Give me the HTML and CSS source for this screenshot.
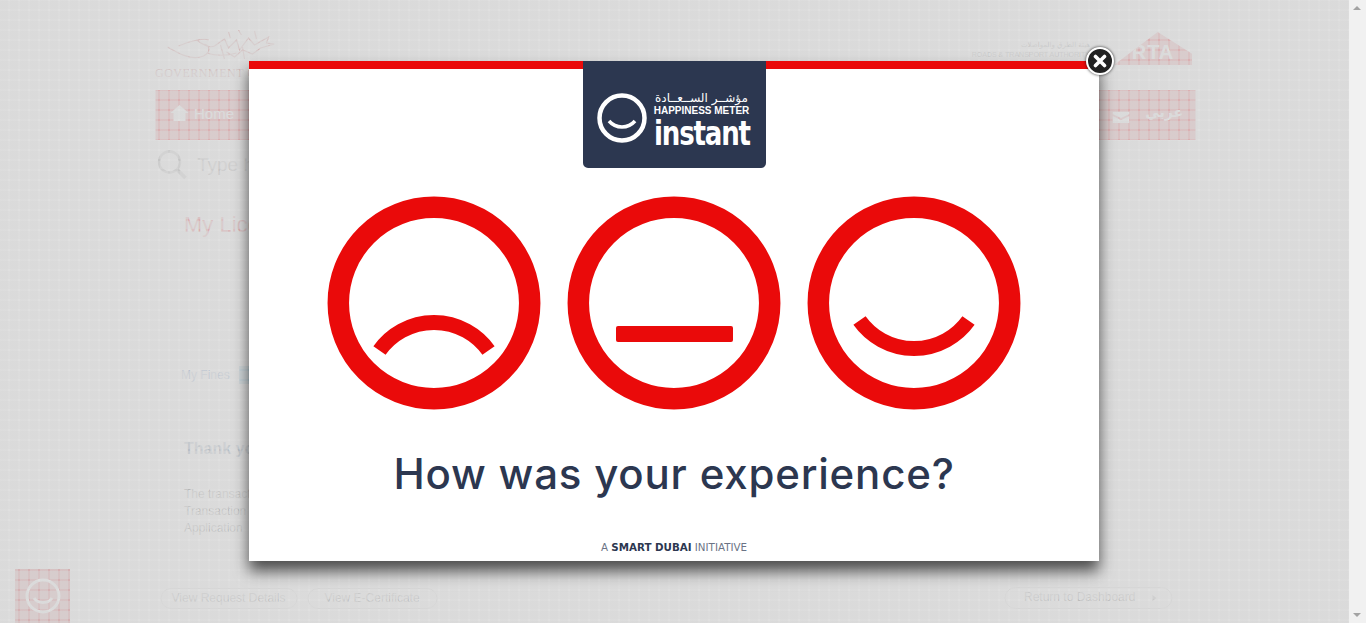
FILE: index.html
```html
<!DOCTYPE html>
<html lang="en">
<head>
    <meta charset="UTF-8">
    <meta name="viewport" content="width=device-width, initial-scale=1.0">
    <title>Happiness Meter</title>
    <link rel="stylesheet" href="styles.css">
</head>
<body>
<div class="viewport">
    <div class="main">
        <div class="page">
            <header class="top">
                <div class="gov">
                    <svg class="gov-mark" width="108" height="34" viewBox="0 0 108 34" fill="none" stroke="#c23a3a" stroke-width="1.200">
                        <path d="M12 17c14-6 26-8 30-6M1 18c10 6 24 14 36 9 8-4 6-10 1-12M30 11c8 6 14 8 18 6l10-7 4 9 8-8 3 10 9-12 6 7 14-8-2 6 8 1-14 4-8 6-10-4-8 7-8-5"/>
                        <path d="M40 24c10 3 20 3 30 0M62 3l2 6M72 1l3 5M88 2l2 8M54 16l4 14M76 18l2 12"/>
                    </svg>
                    <div class="gov-name">GOVERNMENT OF DUBAI</div>
                </div>
                <div class="rta">
                    <div class="rta-name">
                        <div class="rta-ar">هيئة الطرق والمواصلات</div>
                        <div class="rta-en">ROADS &amp; TRANSPORT AUTHORITY</div>
                    </div>
                    <div class="rta-logo">RTA</div>
                </div>
            </header>

            <nav class="menu">
                <a class="menu-item" href="#">
                    <svg width="18" height="16" viewBox="0 0 18 16" fill="#fff"><path d="M9 0L0 8h3v8h12V8h3z"/></svg>
                    Home
                </a>
                <a class="menu-item" href="#">
                    <svg width="18" height="16" viewBox="0 0 18 16" fill="#fff"><path d="M9 0L0 8h3v8h12V8h3z"/></svg>
                </a>
                <div class="menu-right">
                    <svg width="17" height="11" viewBox="0 0 17 11" fill="#fff"><path d="M0 0h17v2L8.500 6 0 2zM0 4l8.500 4L17 4v7H0z"/></svg>
                    <a class="menu-lang" href="#">عربي</a>
                </div>
            </nav>

            <div class="search">
                <svg width="30" height="30" viewBox="0 0 30 30" fill="none" stroke="#777"><circle cx="12" cy="12" r="10.500" stroke-width="2.500"/><path d="M20 20l8 8" stroke-width="3.500"/></svg>
                <span class="search-text">Type here</span>
            </div>

            <div class="content">
                <h2 class="title">My Licences</h2>
                <div class="fines">
                    My Fines
                    <span class="fines-icon"></span>
                </div>
                <h3 class="thanks">Thank you</h3>
                <p class="note">The transaction<br>Transaction<br>Application</p>
            </div>

            <div class="actions">
                <a class="pill pill-details" href="#">View Request Details</a>
                <a class="pill pill-cert" href="#">View E-Certificate</a>
                <a class="pill pill-back" href="#">Return to Dashboard <span class="pill-arrow"></span></a>
            </div>
        </div>

        <div class="feedback">
            <svg width="36" height="36" viewBox="0 0 36 36" fill="none" stroke="#fff" stroke-width="3"><circle cx="18" cy="18" r="16"/><path d="M9 20c4 6 14 6 18 0"/></svg>
        </div>

        <div class="overlay"></div>

        <div class="modal">
            <div class="badge">
                <svg class="badge-face" width="52" height="52" viewBox="0 0 52 52" fill="none" stroke="#fff"><circle cx="26" cy="26" r="22.500" stroke-width="4.500"/><path d="M13 29c7 8 19 8 26 0" stroke-width="3.500"/></svg>
                <div class="badge-words">
                    <div class="badge-ar">مؤشــر الســعــادة</div>
                    <div class="badge-en">HAPPINESS METER</div>
                    <div class="badge-instant">instant</div>
                </div>
            </div>

            <div class="faces">
                <svg class="face" viewBox="0 0 214 214">
                    <circle class="face-ring" cx="107" cy="107" r="95.700"/>
                    <path class="face-mouth" d="M52.500 154.500A67 67 0 0 1 161.500 154.500"/>
                </svg>
                <svg class="face" viewBox="0 0 214 214">
                    <circle class="face-ring" cx="107" cy="107" r="95.700"/>
                    <rect class="face-bar" x="49" y="130" width="117" height="16" rx="2"/>
                </svg>
                <svg class="face" viewBox="0 0 214 214">
                    <circle class="face-ring" cx="107" cy="107" r="95.700"/>
                    <path class="face-mouth" d="M52.500 124.500A67 67 0 0 0 161.500 124.500"/>
                </svg>
            </div>

            <h1 class="question">How was your experience?</h1>
            <div class="initiative">A <b>SMART DUBAI</b> INITIATIVE</div>

            <button class="close" type="button" aria-label="Close">
                <svg width="14" height="14" viewBox="0 0 14 14" fill="none" stroke="#fff" stroke-width="3.600" stroke-linecap="round"><path d="M2.500 2.500l9 9M11.500 2.500l-9 9"/></svg>
            </button>
        </div>
    </div>

    <div class="scrollbar">
        <span class="arrow-up"></span>
        <span class="arrow-down"></span>
    </div>
</div>
</body>
</html>
```

FILE: styles.css
```css
html, body {
    margin: 0;
    padding: 0;
    height: 100%;
    overflow: hidden;
}
body {
    background-color: #fff;
    color: #333;
    font-family: "Liberation Sans", Arial, sans-serif;
}
a {
    color: inherit;
    text-decoration: none;
}
.viewport {
    display: flex;
    height: 623px;
}
.main {
    position: relative;
    flex: 1;
    overflow: hidden;
}

/* page behind the popup */
.page {
    width: 1040px;
    margin: 0 auto;
    transform: translateX(0.5px);
}
.top {
    height: 90px;
    display: flex;
    justify-content: space-between;
}
.gov {
    padding-top: 29px;
}
.gov-mark {
    display: block;
    margin-left: 11px;
}
.gov-name {
    margin-top: 3px;
    font-family: "Liberation Serif", serif;
    font-size: 12px;
    letter-spacing: 0.5px;
    color: #a33;
    white-space: nowrap;
}
.rta {
    display: flex;
    align-items: flex-start;
}
.rta-name {
    margin-top: 41px;
    margin-right: 24px;
    font-size: 7px;
    color: #222;
    line-height: 9px;
}
.rta-ar {
    font-family: "DejaVu Sans", sans-serif;
    text-align: right;
}
.rta-logo {
    margin-top: 32px;
    width: 78px;
    height: 33px;
    margin-right: 3px;
    background: #e30a17;
    clip-path: polygon(0 100%, 56% 0, 100% 66%, 100% 100%);
    color: #fff;
    font-size: 20px;
    font-weight: bold;
    letter-spacing: 1px;
    text-align: center;
    line-height: 40px;
}
.menu {
    height: 50px;
    background: #e30a17;
    color: #fff;
    display: flex;
    align-items: center;
    padding: 0 12px 0 15px;
    font-size: 15px;
}
.menu-item {
    display: flex;
    align-items: center;
    gap: 6px;
    margin-right: 15px;
    padding-bottom: 4px;
}
.menu-right {
    margin-left: auto;
    display: flex;
    align-items: center;
    gap: 16px;
    padding-top: 4px;
}
.menu-lang {
    font-family: "DejaVu Sans", sans-serif;
    font-size: 14px;
    font-weight: bold;
    padding-bottom: 10px;
}
.search {
    height: 50px;
    display: flex;
    align-items: center;
    gap: 9px;
    padding-left: 2px;
}
.search-text {
    font-size: 19px;
    color: #777;
    margin-left: 1px;
}
.content {
    padding-left: 29px;
}
.title {
    margin: 0;
    padding-top: 22px;
    font-size: 22px;
    font-weight: normal;
    color: #e30a17;
    line-height: 26px;
}
.fines {
    margin-top: 128px;
    margin-left: -3px;
    display: flex;
    align-items: center;
    gap: 10px;
    font-size: 12px;
    color: #36a;
    line-height: 14px;
}
.fines-icon {
    width: 12px;
    height: 18px;
    background: #39c;
}
.thanks {
    margin: 56px 0 0;
    font-size: 16px;
    font-weight: bold;
    color: #357;
    line-height: 18px;
}
.note {
    margin: 28px 0 0;
    font-size: 12px;
    line-height: 17px;
    color: #333;
}
.actions {
    margin-top: 50px;
    display: flex;
    align-items: center;
    padding-left: 5px;
    font-size: 12px;
    color: #555;
}
.pill {
    box-sizing: border-box;
    height: 21px;
    line-height: 19px;
    border: 1px solid #c4c4c4;
    border-radius: 11px;
    text-align: center;
}
.pill-details {
    width: 137px;
}
.pill-cert {
    width: 130px;
    margin-left: 10px;
}
.pill-back {
    width: 168px;
    height: 22px;
    margin-left: auto;
    margin-right: 23px;
    font-size: 12px;
    text-align: left;
    padding-left: 19px;
}
.pill-arrow {
    display: inline-block;
    margin-left: 14px;
    border-left: 4px solid #555;
    border-top: 3px solid transparent;
    border-bottom: 3px solid transparent;
}
.feedback {
    position: absolute;
    left: 15px;
    top: 569px;
    width: 55px;
    height: 54px;
    background: #c8141e;
    display: flex;
    align-items: center;
    justify-content: center;
}

/* see-through mesh over the whole page */
.overlay {
    position: absolute;
    inset: 0;
    background-color: rgba(216, 216, 216, 0.8);
    background-image:
        linear-gradient(90deg, transparent 2px, rgba(216, 216, 216, 0.45) 2px),
        linear-gradient(180deg, transparent 2px, rgba(216, 216, 216, 0.45) 2px);
    background-size: 10px 10px;
    background-position: 8px 0, 0 -1px;
}

/* popup */
.modal {
    position: absolute;
    left: 249px;
    top: 61px;
    box-sizing: border-box;
    width: 850px;
    height: 500px;
    background: #fff;
    border-top: 8px solid #ea0a0a;
    box-shadow: 0 10px 14px rgba(0, 0, 0, 0.65);
    display: flex;
    flex-direction: column;
    align-items: center;
}
.badge {
    box-sizing: border-box;
    margin-top: -8px;
    width: 183px;
    height: 107px;
    flex: none;
    background: #2c3750;
    border-radius: 0 0 5px 5px;
    color: #fff;
    display: flex;
    padding: 30px 0 0 13px;
}
.badge-face {
    flex: none;
    margin-top: 1px;
}
.badge-words {
    margin-left: 6px;
    width: 96px;
    text-align: center;
}
.badge-ar {
    direction: rtl;
    font-family: "DejaVu Sans", sans-serif;
    font-size: 12px;
    line-height: 14px;
    white-space: nowrap;
}
.badge-en {
    margin-top: 1px;
    font-size: 10px;
    font-weight: bold;
    line-height: 9px;
    white-space: nowrap;
}
.badge-instant {
    width: 122px;
    font-family: "DejaVu Sans", sans-serif;
    font-size: 33px;
    font-weight: bold;
    line-height: 38px;
    letter-spacing: -1.500px;
    text-align: left;
    white-space: nowrap;
    transform: scaleX(0.79);
    transform-origin: left center;
}
.faces {
    margin-top: 28px;
    display: flex;
    gap: 26px;
}
.face {
    width: 214px;
    height: 214px;
    display: block;
}
.face-ring, .face-mouth {
    fill: none;
    stroke: #ea0a0a;
}
.face-ring {
    stroke-width: 21.500;
}
.face-mouth {
    stroke-width: 15;
}
.face-bar {
    fill: #ea0a0a;
}
.question {
    margin: 36px 0 0;
    font-family: Inter, "Liberation Sans", sans-serif;
    font-size: 42px;
    font-weight: 500;
    line-height: 56px;
    letter-spacing: 0.800px;
    color: #2c3750;
}
.initiative {
    margin-top: 38px;
    font-family: "DejaVu Sans", sans-serif;
    font-size: 10.300px;
    line-height: 14px;
    color: #6b7385;
}
.initiative b {
    color: #2c3750;
}
.close {
    position: absolute;
    right: -15px;
    top: -22px;
    box-sizing: border-box;
    width: 28px;
    height: 28px;
    padding: 0;
    border: 2px solid #fff;
    border-radius: 50%;
    background: #222;
    box-shadow: 0 0 3px rgba(0, 0, 0, 0.8);
    display: flex;
    align-items: center;
    justify-content: center;
}

/* browser scrollbar */
.scrollbar {
    position: relative;
    width: 17px;
    background: #f1f1f1;
}
.arrow-up, .arrow-down {
    position: absolute;
    left: 4px;
    border-left: 4px solid transparent;
    border-right: 4px solid transparent;
}
.arrow-up {
    top: 6px;
    border-bottom: 4px solid #a3a3a3;
}
.arrow-down {
    bottom: 6px;
    border-top: 4px solid #a3a3a3;
}
```
